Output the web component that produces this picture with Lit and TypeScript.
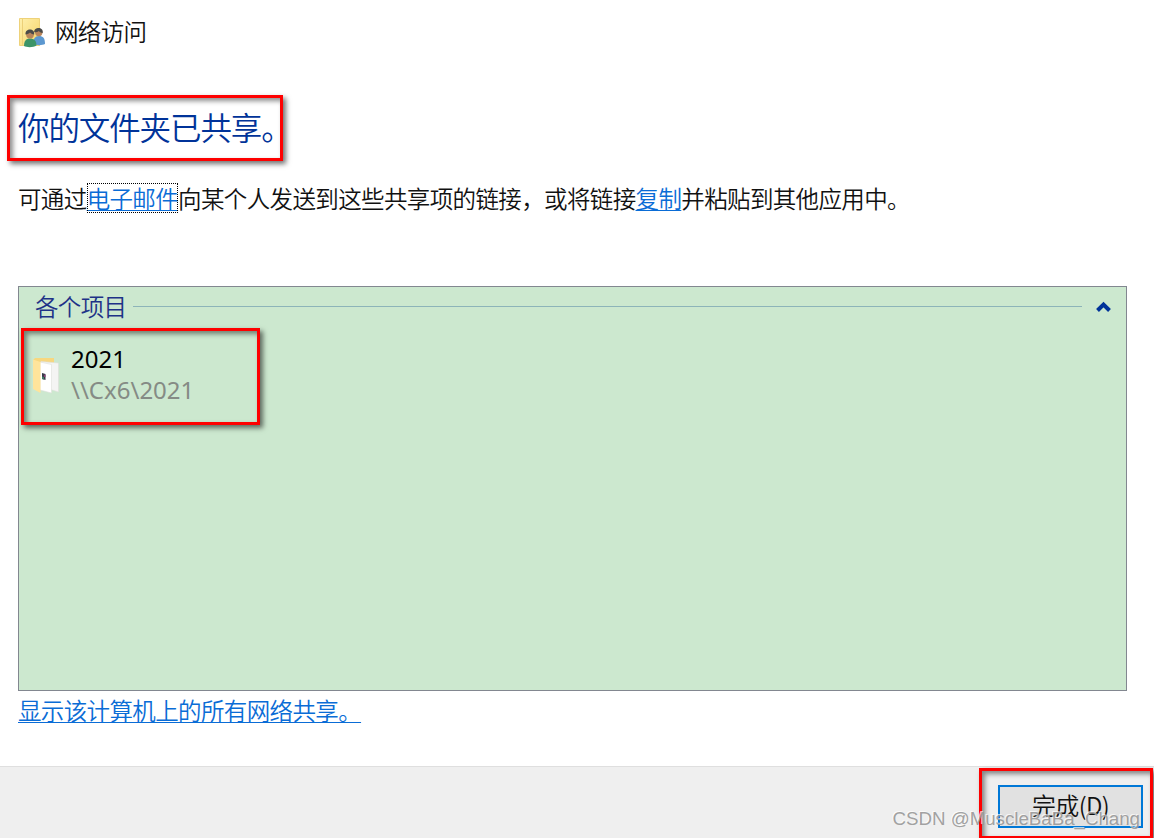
import { LitElement, css, html, svg } from "lit";
import { customElement, property } from "lit/decorators.js";

const usersIcon = svg`
  <defs>
    <linearGradient id="leaf" x1="0" y1="0" x2="1" y2="1">
      <stop offset="0" stop-color="#fff0ad" />
      <stop offset="1" stop-color="#f5d468" />
    </linearGradient>
  </defs>
  <path d="M0.5 0.5H20.500V27.5H0.5z" fill="url(#leaf)" stroke="#eed27a" />
  <path d="M3.5 1V27" stroke="#ecd078" />
  <path d="M14 26c0-5 2-8 6-8s6 2 6 8c-3 1.500-8 1.500-12 0z" fill="#5c98d0" />
  <circle cx="19.800" cy="14.5" r="3.7" fill="#b9855b" />
  <path d="M15.200 14.200c-.3-3 2.300-4.200 4.500-4.200s4.500 1.500 4 4.900c-2-.2-3.400-1.400-4-2-.8 1-2.500 1.300-4.500 1.300z" fill="#4a4b49" />
  <path d="M5 28c0-5 2-7.500 6-7.500s6.500 2.500 6.500 7c-3 2-9.500 2.200-12.500.5z" fill="#3c9468" />
  <circle cx="11" cy="16.500" r="3.900" fill="#b9855b" />
  <path d="M6.500 16.400C6.200 13 8.600 11.500 11 11.500s4.600 1.500 4.200 4.900c-2-.2-3.600-1.400-4.200-2-.9 1-2.500 1.800-4.500 2z" fill="#4a4b49" />
`;

const folderIcon = svg`
  <path d="M0 2 2 0H21V32H7z" fill="#f7d77f" />
  <path d="M8 3.500 25.500 5V34L16 31z" fill="#f4f4f3" stroke="#dedfda" stroke-width=".6" />
  <path d="M7 4 18.500 6.500V35L7 32z" fill="#fff" stroke="#dedfda" stroke-width=".6" />
  <path d="M0 1.500 7.500 4V35L0 31z" fill="#ffe49b" />
  <path d="M9 15 12.500 16V22L9 21z" fill="#3a3a4a" />
  <path d="M9 18.500 11 19V21.500L9 21z" fill="#417b63" />
  <path d="M11 16.500 12.500 17V19H11z" fill="#8a3d74" />
`;

@customElement("share-item")
export class ShareItem extends LitElement {
  @property({ type: String })
  name = "";

  @property({ type: String })
  path = "";

  static styles = css`
    :host {
      display: flex;
      align-items: center;
      gap: 11px;
    }
    .icon {
      width: 27px;
      height: 36px;
      flex: none;
      margin-top: 4px;
    }
    .name,
    .path {
      font-size: 24px;
      font-weight: 400;
      line-height: 31px;
      white-space: nowrap;
    }
    .name {
      color: #000;
    }
    .path {
      color: #858b85;
    }
  `;

  render() {
    return html`
      <svg class="icon" viewBox="0 0 27 36">${folderIcon}</svg>
      <div>
        <div class="name">${this.name}</div>
        <div class="path">${this.path}</div>
      </div>
    `;
  }
}

@customElement("app-root")
export class AppRoot extends LitElement {
  static styles = css`
    :host {
      display: flex;
      flex-direction: column;
      position: relative;
      box-sizing: border-box;
      width: 1154px;
      height: 838px;
      overflow: hidden;
      background: #fff;
      color: #111;
      font-family: "Noto Sans", "Noto Sans CJK SC", sans-serif;
      font-size: 23.5px;
      font-weight: 350;
    }
    .cjk {
      font-family: "Noto Sans CJK SC", sans-serif;
      letter-spacing: -0.63px;
      white-space: nowrap;
    }
    .content {
      flex: 1;
      padding: 15px 27px 0 18px;
    }
    .header {
      display: flex;
      align-items: center;
      gap: 8px;
      height: 32px;
    }
    .header svg {
      width: 28px;
      height: 30px;
      margin: 3px 0 0 1px;
    }
    .title {
      margin: 56px 0 0;
      height: 46px;
      line-height: 46px;
      font-size: 31.5px;
      font-weight: 350;
      letter-spacing: -1.1px;
      color: #003399;
    }
    .hint {
      margin: 31px 0 0;
      height: 36px;
      line-height: 36px;
    }
    .link {
      color: #0a6cd6;
      text-decoration: underline;
      text-decoration-thickness: 1px;
      text-underline-offset: 2px;
      text-decoration-skip-ink: none;
      cursor: pointer;
    }
    .focused {
      position: relative;
    }
    .focused::after {
      content: "";
      position: absolute;
      inset: 2px 0 2px 0;
      border: 1px dotted #000;
    }
    .panel {
      box-sizing: border-box;
      height: 405px;
      margin-top: 70px;
      border: 1px solid #828790;
      background: #cce8cf;
    }
    .group {
      display: flex;
      align-items: center;
      height: 38px;
      padding: 0 15px 0 16px;
      color: #1e3287;
    }
    .rule {
      flex: 1;
      height: 1px;
      margin: 0 14px 0 7px;
      background: #8db4b9;
    }
    .chevron {
      width: 15px;
      height: 12px;
      margin-top: 1px;
    }
    share-item {
      margin: 18px 0 0 14px;
    }
    .all {
      height: 40px;
      line-height: 38px;
    }
    .footer {
      display: flex;
      justify-content: flex-end;
      box-sizing: border-box;
      height: 72px;
      padding: 18px 11px 0 0;
      border-top: 1px solid #dfdfdf;
      background: #efefef;
    }
    .done {
      box-sizing: border-box;
      width: 145px;
      height: 43px;
      padding: 0 0 3px;
      border: 2px solid #0078d7;
      background: #e1e1e1;
      color: #111;
      font-size: 24px;
      font-weight: 350;
      line-height: 36px;
    }
    .mark {
      position: absolute;
      box-sizing: border-box;
      border: 3px solid #fe0000;
      box-shadow:
        3px 3px 5px rgba(0, 0, 0, 0.55),
        inset 3px 3px 5px rgba(0, 0, 0, 0.45);
      pointer-events: none;
    }
    .mark-title {
      left: 7px;
      top: 95px;
      width: 276px;
      height: 66px;
    }
    .mark-item {
      left: 21px;
      top: 328px;
      width: 239px;
      height: 97px;
    }
    .mark-done {
      left: 979px;
      top: 768px;
      width: 174px;
      height: 71px;
    }
    .watermark {
      position: absolute;
      right: 14px;
      bottom: 7px;
      font-family: "Liberation Sans", sans-serif;
      font-size: 18.7px;
      line-height: 24px;
      color: rgba(150, 150, 150, 0.9);
      text-shadow: -1px -1px 0 rgba(255, 255, 255, 0.7);
      white-space: nowrap;
    }
  `;

  render() {
    return html`
      <div class="content">
        <div class="header">
          <svg viewBox="0 0 28 30">${usersIcon}</svg>
          <span class="cjk">网络访问</span>
        </div>
        <h1 class="title cjk">你的文件夹已共享。</h1>
        <p class="hint cjk">可通过<a class="link focused">电子邮件</a>向某个人发送到这些共享项的链接，或将链接<a class="link">复制</a>并粘贴到其他应用中。</p>
        <div class="panel">
          <div class="group">
            <span class="cjk">各个项目</span>
            <span class="rule"></span>
            <svg class="chevron" viewBox="0 0 15 12">
              <path d="M1.500 9.500 7.500 3.500 13.500 9.500" fill="none" stroke="#003399" stroke-width="4" />
            </svg>
          </div>
          <share-item name="2021" path="\\\\Cx6\\2021"></share-item>
        </div>
        <div class="all"><a class="link cjk">显示该计算机上的所有网络共享。</a></div>
      </div>
      <div class="footer">
        <button class="done cjk">完成(D)</button>
      </div>
      <div class="mark mark-title"></div>
      <div class="mark mark-item"></div>
      <div class="mark mark-done"></div>
      <div class="watermark">CSDN @MuscleBaBa_Chang</div>
    `;
  }
}
